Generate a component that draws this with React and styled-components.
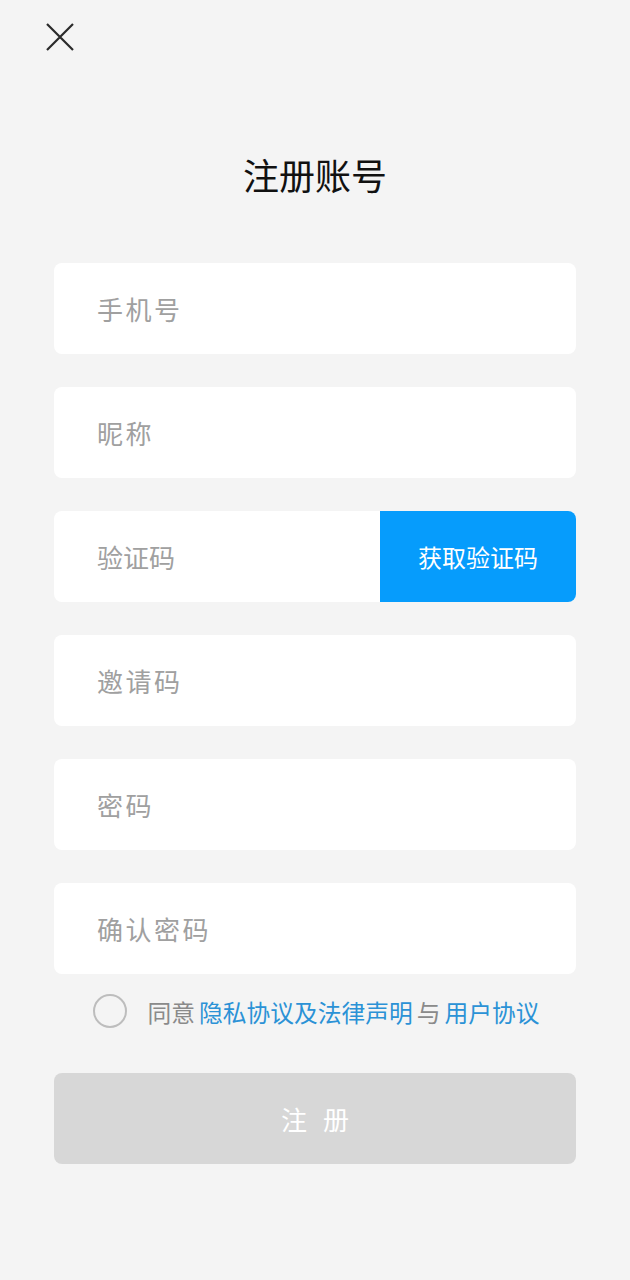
import React, { useState } from 'react';
import styled, { createGlobalStyle } from 'styled-components';

const GlobalStyle = createGlobalStyle`
  html, body {
    margin: 0;
    padding: 0;
    background-color: #f4f4f4;
  }
  * {
    box-sizing: border-box;
  }
  body {
    font-family: "Noto Sans CJK SC", "Noto Sans", sans-serif;
  }
`;

const Page = styled.div`
  width: 630px;
  min-height: 1280px;
  display: flex;
  flex-direction: column;
  background-color: #f4f4f4;
`;

const TopBar = styled.div`
  height: 74px;
  padding: 23px 0 0 46px;
`;

const CloseButton = styled.button`
  width: 28px;
  height: 28px;
  padding: 0;
  border: none;
  background: none;
  display: flex;
  cursor: pointer;
`;

const Title = styled.h1`
  margin: 75px 0 3px;
  height: 50px;
  line-height: 50px;
  font-size: 36px;
  font-weight: 400;
  text-align: center;
  color: #111111;
`;

const Form = styled.form`
  margin-top: 61px;
  padding: 0 54px;
  display: flex;
  flex-direction: column;
  gap: 33px;
`;

const Field = styled.div`
  height: 91px;
  display: flex;
  background-color: #ffffff;
  border-radius: 8px;
  overflow: hidden;
`;

const Input = styled.input`
  flex: 1;
  min-width: 0;
  height: 100%;
  border: none;
  outline: none;
  background: transparent;
  padding: 0 0 0 43px;
  font-family: inherit;
  font-size: 26px;
  color: #333333;
  letter-spacing: ${p => p.$spacing || 0}px;
  &::placeholder {
    color: #a0a0a0;
  }
`;

const CodeButton = styled.button`
  width: 196px;
  height: 100%;
  border: none;
  background-color: #069cfc;
  color: #ffffff;
  font-family: inherit;
  font-size: 24px;
  cursor: pointer;
`;

const Agreement = styled.div`
  margin-top: 19px;
  height: 36px;
  display: flex;
  align-items: center;
  justify-content: center;
  gap: 20px;
  padding-left: 3px;
`;

const Radio = styled.span`
  width: 34px;
  height: 34px;
  border-radius: 50%;
  border: 2px solid ${p => (p.$checked ? '#069cfc' : '#bdbdbd')};
  background-color: ${p => (p.$checked ? '#069cfc' : 'transparent')};
  cursor: pointer;
`;

const AgreeText = styled.p`
  margin: 0;
  font-size: 23.75px;
  color: #8a8a8a;
  white-space: nowrap;
`;

const Link = styled.a`
  margin: 0 ${p => (p.$last ? 0 : 4)}px 0 4px;
  color: #2b92d6;
  text-decoration: none;
`;

const Submit = styled.button`
  margin: 44px 54px 0;
  height: 91px;
  border: none;
  border-radius: 8px;
  background-color: #d7d7d7;
  color: #ffffff;
  font-family: inherit;
  font-size: 26px;
  letter-spacing: 16px;
  text-indent: 16px;
`;

const fields = [
  { name: 'phone', placeholder: '手机号', spacing: 2.5 },
  { name: 'nickname', placeholder: '昵称', spacing: 2.5 },
  { name: 'code', placeholder: '验证码', spacing: 0, withCode: true },
  { name: 'invite', placeholder: '邀请码', spacing: 2.5 },
  { name: 'password', placeholder: '密码', spacing: 2.5, type: 'password' },
  { name: 'confirm', placeholder: '确认密码', spacing: 2.5, type: 'password' },
];

export default function App() {
  const [agreed, setAgreed] = useState(false);

  return (
    <Page>
      <GlobalStyle />
      <TopBar>
        <CloseButton type="button" aria-label="关闭">
          <svg width="28" height="28" viewBox="0 0 28 28">
            <path d="M1 1 L27 27 M27 1 L1 27" stroke="#2a2a2a" strokeWidth="2.2" fill="none" />
          </svg>
        </CloseButton>
      </TopBar>
      <Title>注册账号</Title>
      <Form onSubmit={e => e.preventDefault()}>
        {fields.map(f => (
          <Field key={f.name}>
            <Input
              name={f.name}
              type={f.type || 'text'}
              placeholder={f.placeholder}
              $spacing={f.spacing}
            />
            {f.withCode && <CodeButton type="button">获取验证码</CodeButton>}
          </Field>
        ))}
      </Form>
      <Agreement>
        <Radio $checked={agreed} onClick={() => setAgreed(!agreed)} />
        <AgreeText>
          同意<Link>隐私协议及法律声明</Link>与<Link $last>用户协议</Link>
        </AgreeText>
      </Agreement>
      <Submit type="button" disabled={!agreed}>注册</Submit>
    </Page>
  );
}
